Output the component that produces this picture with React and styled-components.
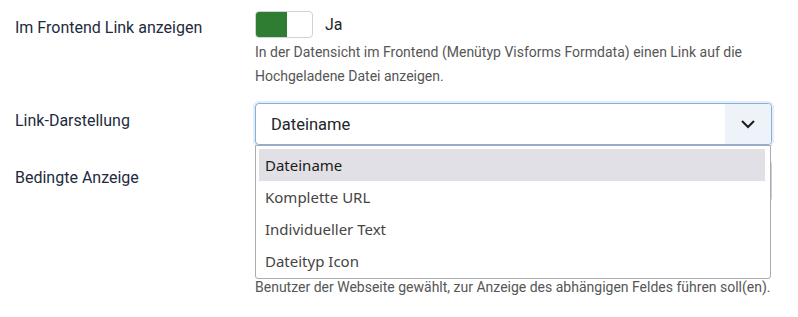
import React from "react";
import styled, { createGlobalStyle } from "styled-components";

const GlobalStyle = createGlobalStyle`
  body {
    margin: 0;
    background: #fff;
    font-family: Roboto, "Liberation Sans", sans-serif;
  }
`;

const Page = styled.div`
  width: 798px;
  height: 317px;
  overflow: hidden;
  padding: 0 0 0 15px;
  box-sizing: border-box;
`;

const Row = styled.div`
  display: grid;
  grid-template-columns: 240px 517px;
  margin-top: ${(p) => p.top}px;
`;

const Label = styled.div`
  font-size: 16px;
  line-height: 20px;
  color: #1e2b3d;
  padding-top: ${(p) => p.pad || 0}px;
`;

const Control = styled.div`
  position: relative;
  display: flex;
  flex-direction: column;
`;

const SwitchLine = styled.div`
  display: flex;
  align-items: center;
  gap: 12px;
`;

const Switch = styled.div`
  width: 58px;
  height: 27px;
  box-sizing: border-box;
  border: 1px solid #cfd3d8;
  border-radius: 4px;
  display: flex;
  overflow: hidden;
`;

const SwitchOn = styled.span`
  width: 31px;
  background: #2e7d32;
`;

const SwitchText = styled.span`
  font-size: 16px;
  color: #22262a;
`;

const Help = styled.div`
  font-size: 14px;
  line-height: 24px;
  color: #565656;
  white-space: nowrap;
  margin-top: ${(p) => p.top || 0}px;
`;

const SelectBox = styled.div`
  height: 42px;
  box-sizing: border-box;
  border: 1px solid ${(p) => (p.focus ? "#86aee0" : "#c8cdd3")};
  box-shadow: ${(p) => (p.focus ? "0 0 0 2px #e4edf8" : "none")};
  border-radius: 4px;
  display: flex;
  align-items: center;
  justify-content: space-between;
  overflow: hidden;
  background: #fff;
`;

const SelectValue = styled.span`
  font-size: 16.5px;
  color: #22262a;
  padding-left: 15px;
`;

const Arrow = styled.span`
  width: 46px;
  height: 100%;
  background: #eef3fa;
  display: flex;
  align-items: center;
  justify-content: center;
`;

const Popup = styled.ul`
  position: absolute;
  top: 42px;
  left: 0;
  width: 516px;
  height: 134px;
  box-sizing: border-box;
  margin: 0;
  padding: 3px 5px 0 3px;
  list-style: none;
  background: #fff;
  border: 1px solid #a9abb0;
  border-radius: 0 0 3px 3px;
  z-index: 5;
  font-family: "Noto Sans", "Open Sans", sans-serif;
`;

const Option = styled.li`
  height: 32px;
  display: flex;
  align-items: center;
  padding-left: 6px;
  font-size: 15px;
  color: ${(p) => (p.active ? "#1a1a1a" : "#444")};
  background: ${(p) => (p.active ? "#e0e0e6" : "transparent")};
`;

const Chevron = () => (
  <svg width="16" height="10" viewBox="0 0 16 10">
    <path d="M2 2l6 6 6-6" fill="none" stroke="#1d1d1d" strokeWidth="2" />
  </svg>
);

const options = ["Dateiname", "Komplette URL", "Individueller Text", "Dateityp Icon"];

export default function App() {
  return (
    <Page>
      <GlobalStyle />
      <Row top={11}>
        <Label pad={7}>Im Frontend Link anzeigen</Label>
        <Control>
          <SwitchLine>
            <Switch>
              <SwitchOn />
            </Switch>
            <SwitchText>Ja</SwitchText>
          </SwitchLine>
          <Help top={2}>
            In der Datensicht im Frontend (Menütyp Visforms Formdata) einen Link auf die
            <br />
            Hochgeladene Datei anzeigen.
          </Help>
        </Control>
      </Row>
      <Row top={15}>
        <Label pad={8}>Link-Darstellung</Label>
        <Control>
          <SelectBox focus>
            <SelectValue>Dateiname</SelectValue>
            <Arrow>
              <Chevron />
            </Arrow>
          </SelectBox>
          <Popup>
            {options.map((o, i) => (
              <Option key={o} active={i === 0}>
                {o}
              </Option>
            ))}
          </Popup>
        </Control>
      </Row>
      <Row top={15}>
        <Label pad={8}>Bedingte Anzeige</Label>
        <Control>
          <SelectBox>
            <SelectValue>Nicht bedingt</SelectValue>
            <Arrow />
          </SelectBox>
          <Help top={1}>
            Legen Sie fest, ob dieses Feld nur angezeigt wird, wenn in einem
            <br />
            anderen Feld eine bestimmte Option ausgewählt ist. Wählen Sie
            <br />
            dazu die Option(en) des anderen Feldes, die, wenn sie vom
            <br />
            Benutzer der Webseite gewählt, zur Anzeige des abhängigen Feldes führen soll(en).
          </Help>
        </Control>
      </Row>
    </Page>
  );
}
